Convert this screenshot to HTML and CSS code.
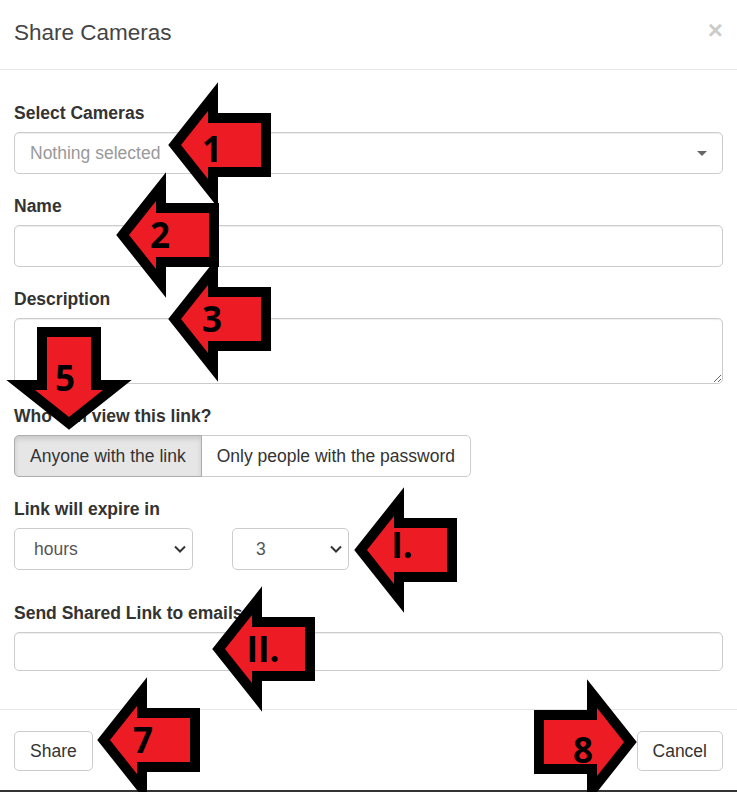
FILE: index.html
```html
<!DOCTYPE html>
<html lang="en">
<head>
    <meta charset="UTF-8">
    <meta name="viewport" content="width=device-width, initial-scale=1.0">
    <title>Share Cameras</title>
    <link rel="stylesheet" href="styles.css">
</head>
<body>
    <div class="modal-content">
        <div class="modal-header">
            <h4 class="modal-title">Share Cameras</h4>
            <button type="button" class="close">&times;</button>
        </div>

        <div class="modal-body">
            <div class="form-group">
                <label>Select Cameras</label>
                <div class="picker">
                    <span class="placeholder">Nothing selected</span>
                    <span class="caret"></span>
                </div>
            </div>

            <div class="form-group">
                <label for="share-name">Name</label>
                <input type="text" id="share-name" class="form-control">
            </div>

            <div class="form-group">
                <label for="share-desc">Description</label>
                <textarea id="share-desc" class="form-control description"></textarea>
            </div>

            <div class="form-group">
                <label>Who can view this link?</label>
                <div class="btn-group">
                    <button type="button" class="btn active">Anyone with the link</button>
                    <button type="button" class="btn">Only people with the password</button>
                </div>
            </div>

            <div class="form-group expire">
                <label>Link will expire in</label>
                <div class="expire-row">
                    <div class="select-box unit">
                        <span>hours</span>
                        <svg width="12" height="8" viewBox="0 0 12 8"><polyline points="1,1.5 6,6.5 11,1.5" fill="none" stroke="#333" stroke-width="2"/></svg>
                    </div>
                    <div class="select-box amount">
                        <span>3</span>
                        <svg width="12" height="8" viewBox="0 0 12 8"><polyline points="1,1.5 6,6.5 11,1.5" fill="none" stroke="#333" stroke-width="2"/></svg>
                    </div>
                </div>
            </div>

            <div class="form-group">
                <label for="share-emails">Send Shared Link to emails</label>
                <input type="text" id="share-emails" class="form-control emails">
            </div>
        </div>

        <div class="modal-footer">
            <button type="button" class="btn">Share</button>
            <button type="button" class="btn">Cancel</button>
        </div>

        <!-- numbered callout arrows drawn over the dialog -->
        <svg class="callouts" width="737" height="792" viewBox="0 0 737 792">
            <defs>
                <polygon id="arrow" points="13,0 40,-34 40,-22 93,-22 93,22 40,22 40,34"
                         fill="#ed1c24" stroke="#000" stroke-width="20"
                         stroke-linejoin="miter" stroke-miterlimit="4" paint-order="stroke"/>
            </defs>
            <use href="#arrow" transform="translate(168 145)"/>
            <text x="212" y="162">1</text>
            <use href="#arrow" transform="translate(116 235)"/>
            <text x="160" y="248">2</text>
            <use href="#arrow" transform="translate(168 319)"/>
            <text x="212" y="332">3</text>
            <use href="#arrow" transform="translate(69 430) rotate(-90)"/>
            <text x="65" y="391">5</text>
            <use href="#arrow" transform="translate(354 550)"/>
            <text x="402" y="558">I.</text>
            <use href="#arrow" transform="translate(212 649)"/>
            <text x="263" y="662">II.</text>
            <use href="#arrow" transform="translate(97 740)"/>
            <text x="143" y="753">7</text>
            <use href="#arrow" transform="translate(637 742) scale(-1 1)"/>
            <text x="583" y="763">8</text>
        </svg>
    </div>
</body>
</html>
```

FILE: styles.css
```css
body {
    margin: 0;
    font-family: "Liberation Sans", Arial, sans-serif;
    font-size: 17.5px;
    line-height: 25px;
    color: #333;
    background: #fff;
}
.modal-content {
    position: relative;
    width: 737px;
    border-bottom: 2px solid #333;
    background: #fff;
}
.modal-header {
    display: flex;
    justify-content: space-between;
    align-items: flex-start;
    padding: 17px 14px 20px;
    border-bottom: 1px solid #e5e5e5;
}
.modal-title {
    margin: 0;
    font-size: 22.5px;
    font-weight: normal;
    line-height: 32px;
    color: #444;
}
.close {
    padding: 0;
    border: none;
    background: none;
    font-family: "Liberation Sans", Arial, sans-serif;
    font-size: 26px;
    font-weight: bold;
    line-height: 26px;
    color: #000;
    opacity: 0.2;
    cursor: pointer;
}
.modal-body {
    padding: 31px 14px 18px;
}
.form-group {
    margin-bottom: 20px;
}
.form-group.expire {
    margin-bottom: 31px;
}
label {
    display: block;
    margin-bottom: 6px;
    font-weight: bold;
}
.form-control,
.picker,
.select-box {
    display: block;
    width: 100%;
    height: 42px;
    box-sizing: border-box;
    border: 1px solid #ccc;
    border-radius: 5px;
    background: #fff;
    box-shadow: inset 0 1px 1px rgba(0,0,0,0.075);
    font-family: inherit;
    font-size: 17.5px;
    color: #555;
}
.form-control {
    padding: 7px 15px;
}
.description {
    height: 66px;
    resize: vertical;
}
.emails {
    height: 39px;
}
.picker {
    display: flex;
    align-items: center;
    justify-content: space-between;
    padding: 0 15px;
}
.placeholder {
    color: #999;
}
.caret {
    width: 0;
    height: 0;
    border-top: 5px solid #666;
    border-left: 5px solid transparent;
    border-right: 5px solid transparent;
}
.btn-group {
    display: inline-flex;
}
.btn {
    height: 42px;
    padding: 0 15px;
    border: 1px solid #ccc;
    border-radius: 5px;
    background: #fff;
    font-family: inherit;
    font-size: 17.5px;
    line-height: 25px;
    color: #333;
    cursor: pointer;
}
.btn-group .btn:first-child {
    border-top-right-radius: 0;
    border-bottom-right-radius: 0;
}
.btn-group .btn + .btn {
    margin-left: -1px;
    border-top-left-radius: 0;
    border-bottom-left-radius: 0;
}
.btn.active {
    position: relative;
    background: #e6e6e6;
    border-color: #adadad;
    box-shadow: inset 0 3px 5px rgba(0,0,0,0.125);
}
.expire-row {
    display: flex;
    gap: 39px;
}
.select-box {
    display: flex;
    align-items: center;
    justify-content: space-between;
    padding: 0 6px 0 19px;
    box-shadow: none;
}
.select-box.unit {
    width: 179px;
}
.select-box.amount {
    width: 117px;
    padding-left: 23px;
}
.modal-footer {
    display: flex;
    justify-content: space-between;
    padding: 21px 14px 19px;
    border-top: 1px solid #e5e5e5;
}
.modal-footer .btn {
    height: 40px;
}
.callouts {
    position: absolute;
    top: 0;
    left: 0;
    pointer-events: none;
}
.callouts text {
    font-family: "Open Sans", sans-serif;
    font-weight: 700;
    font-size: 35px;
    fill: #000;
    text-anchor: middle;
}
```
